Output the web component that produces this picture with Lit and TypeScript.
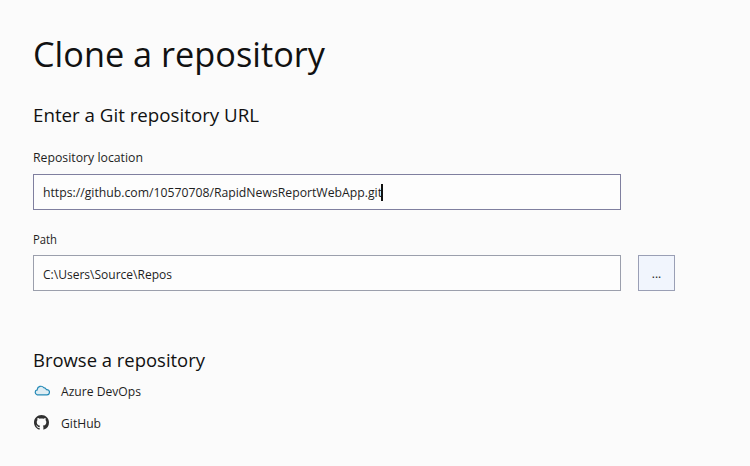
import { LitElement, html, css } from "lit";
import { customElement } from "lit/decorators.js";

@customElement("app-root")
export class AppRoot extends LitElement {
  static styles = css`
    :host { display: block; box-sizing: border-box; height: 466px; padding: 0 0 0 33px; overflow: hidden;
      background: #fbfbfb; color: #1e1e1e; font: 13px/18px "Open Sans", "Noto Sans", sans-serif; }
    * { box-sizing: border-box; }
    svg { display: block; flex: none; }
    .fit { overflow: visible; fill: currentColor; }
    h1, h2 { margin: 0; font-weight: 400; color: #111; }
    h1 { padding-top: 30px; height: 100px; }
    h2 { height: 48px; }
    .label { height: 26px; }
    .path-label { height: 25px; }
    .field { display: flex; align-items: center; width: 588px; height: 36px; padding-left: 9px; border: 1px solid #9b9fac; background: #fdfdfd; }
    .location { margin-bottom: 20px; border-color: #7f7f9f; }
    .row { display: flex; gap: 17px; margin-bottom: 54px; }
    .path { padding-top: 1px; }
    .caret { width: 2px; height: 17px; margin-left: -1px; background: #111; }
    .browse { width: 37px; height: 36px; border: 1px solid #9a9fb5; background: #f1f5fd; padding: 2px 0 0; font: inherit; font-size: 12px; color: #1e1e1e; }
    .link { display: flex; align-items: center; gap: 11px; height: 31px; padding-left: 1px; }
    .providers { height: 30px; }
    .link + .link { height: 33px; gap: 12px; }
  `;

  text(value: string, width: number, size: number, height = 18, baseline = 14) {
    return html`<svg class="fit" width=${width} height=${height}><text x="0" y=${baseline} font-size=${size} textLength=${width} lengthAdjust="spacingAndGlyphs">${value}</text></svg>`;
  }

  render() {
    return html`
      <h1>${this.text("Clone a repository", 292, 35, 48, 37)}</h1>
      <h2>${this.text("Enter a Git repository URL", 226, 19, 28, 22)}</h2>
      <div class="label">${this.text("Repository location", 110, 13.3)}</div>
      <div class="field location">${this.text("https://github.com/10570708/RapidNewsReportWebApp.git", 339, 13.3)}<span class="caret"></span></div>
      <div class="label path-label">${this.text("Path", 24, 13.3)}</div>
      <div class="row"><div class="field path">${this.text("C:\\Users\\Source\\Repos", 129, 13.3)}</div><button class="browse">...</button></div>
      <h2 class="providers">${this.text("Browse a repository", 172, 19, 28, 22)}</h2>
      <div class="link">
        <svg width="16" height="16" viewBox="0 0 16 16"><path d="M3.2 12.2h9.5a2.6 2.6 0 0 0 .3-5.2h-.6a3 3 0 0 0-2.6-1.9 3.7 3.7 0 0 0-6.6 1.9v.3a2.5 2.5 0 0 0 0 4.9Z" transform="translate(0 -.4)" fill="#dfedf3" stroke="#2489b6" stroke-width="1.2"/></svg>
        ${this.text("Azure DevOps", 80, 13.3)}
      </div>
      <div class="link">
        <svg width="15" height="15" viewBox="0 0 16 16"><path fill="#303030" d="M8 0C3.58 0 0 3.58 0 8c0 3.54 2.29 6.53 5.47 7.59.4.07.55-.17.55-.38 0-.19-.01-.82-.01-1.49-2.01.37-2.53-.49-2.69-.94-.09-.23-.48-.94-.82-1.13-.28-.15-.68-.52-.01-.53.63-.01 1.08.58 1.23.82.72 1.21 1.87.87 2.33.66.07-.52.28-.87.51-1.07-1.78-.2-3.64-.89-3.64-3.95 0-.87.31-1.59.82-2.15-.08-.2-.36-1.02.08-2.12 0 0 .67-.21 2.2.82.64-.18 1.32-.27 2-.27s1.36.09 2 .27c1.53-1.04 2.2-.82 2.2-.82.44 1.1.16 1.92.08 2.12.51.56.82 1.27.82 2.15 0 3.07-1.87 3.75-3.65 3.95.29.25.54.73.54 1.48 0 1.07-.01 1.93-.01 2.2 0 .21.15.46.55.38A8.01 8.01 0 0 0 16 8c0-4.42-3.58-8-8-8Z"/></svg>
        ${this.text("GitHub", 40, 13.3)}
      </div>
    `;
  }
}
